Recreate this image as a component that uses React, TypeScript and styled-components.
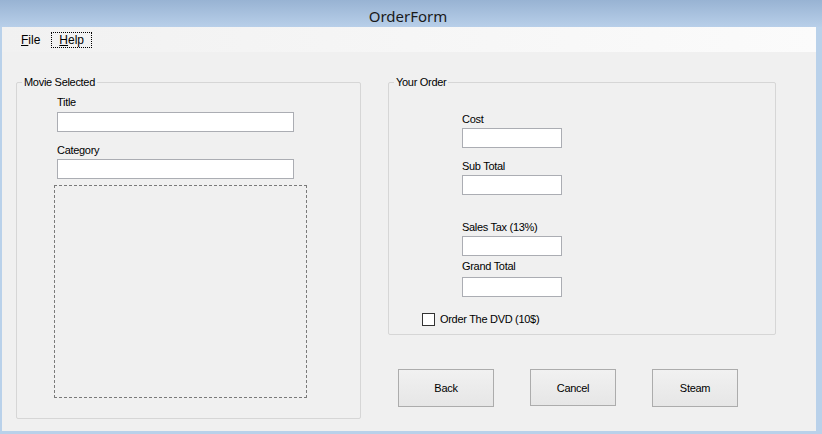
import React from "react";
import styled, { createGlobalStyle } from "styled-components";

const GlobalStyle = createGlobalStyle`
  html, body { margin: 0; padding: 0; }
  body {
    font-family: "Liberation Sans", Arial, sans-serif;
    background: #b9d1ea;
  }
  * { box-sizing: border-box; }
`;

const Window = styled.div`
  width: 822px;
  height: 434px;
  display: flex;
  flex-direction: column;
  background: #b9d1ea;
  overflow: hidden;
`;

const TitleBar = styled.div`
  height: 27px;
  flex: 0 0 27px;
  display: flex;
  align-items: center;
  justify-content: center;
  padding-right: 6px;
  padding-top: 4px;
  background: linear-gradient(#98b3d3, #b8cfe9);
  font-family: "Noto Sans", "Open Sans", sans-serif;
  font-size: 15px;
  color: #1a1a1a;
`;

const Frame = styled.div`
  flex: 1;
  display: flex;
  flex-direction: column;
  padding: 0 6px 3px 2px;
`;

const MenuBar = styled.div`
  height: 25px;
  flex: 0 0 25px;
  display: flex;
  align-items: center;
  gap: 3px;
  padding-left: 11px;
  background: linear-gradient(to right, #f1f1f1, #fbfbfb);
  font-size: 12px;
  color: #000;
`;

const MenuItem = styled.div<{ $focused?: boolean }>`
  height: 16px;
  line-height: 14px;
  padding: 0 7px;
  border: 1px dotted ${(p) => (p.$focused ? "#000" : "transparent")};
`;

const Client = styled.div`
  flex: 1;
  display: flex;
  align-items: flex-start;
  gap: 27px;
  padding: 30px 0 0 14px;
  background: #f0f0f0;
  font-size: 11px;
  letter-spacing: -0.3px;
  color: #000;
`;

const Group = styled.div<{ $w: number; $h: number }>`
  position: relative;
  width: ${(p) => p.$w}px;
  height: ${(p) => p.$h}px;
  border: 1px solid #d6d6d6;
  border-radius: 2px;
  display: flex;
  flex-direction: column;
  align-items: flex-start;
`;

const GroupTitle = styled.span`
  position: absolute;
  top: -7px;
  left: 5px;
  padding: 0 2px;
  line-height: 13px;
  background: #f0f0f0;
`;

const MovieBody = styled.div`
  display: flex;
  flex-direction: column;
  align-items: flex-start;
  padding: 13px 0 0 40px;
`;

const OrderBody = styled.div`
  display: flex;
  flex-direction: column;
  align-items: flex-start;
  padding: 30px 0 0 33px;
`;

const FieldColumn = styled.div`
  display: flex;
  flex-direction: column;
  align-items: flex-start;
  margin-left: 40px;
`;

const Label = styled.span<{ $mt?: number }>`
  display: block;
  line-height: 13px;
  margin-top: ${(p) => p.$mt ?? 0}px;
`;

const TextBox = styled.div<{ $w: number; $mt?: number }>`
  width: ${(p) => p.$w}px;
  height: 20px;
  margin-top: ${(p) => p.$mt ?? 0}px;
  background: #fff;
  border: 1px solid #abadb3;
`;

const PictureBox = styled.div`
  width: 253px;
  height: 213px;
  margin: 6px 0 0 -3px;
  border: 1px dashed #7a7a7a;
`;

const CheckRow = styled.div`
  display: flex;
  align-items: center;
  gap: 5px;
  margin-top: 16px;
`;

const CheckBox = styled.div`
  width: 13px;
  height: 13px;
  background: #fff;
  border: 1px solid #333;
`;

const RightColumn = styled.div`
  display: flex;
  flex-direction: column;
`;

const ButtonRow = styled.div`
  display: flex;
  align-items: flex-start;
  gap: 36px;
  margin: 34px 0 0 10px;
`;

const Button = styled.div<{ $w: number; $h: number }>`
  width: ${(p) => p.$w}px;
  height: ${(p) => p.$h}px;
  display: flex;
  align-items: center;
  justify-content: center;
  background: linear-gradient(#f1f1f1, #e6e6e6);
  border: 1px solid #acacac;
  font-size: 11px;
  color: #000;
`;

export default function App() {
  return (
    <>
      <GlobalStyle />
      <Window>
        <TitleBar>OrderForm</TitleBar>
        <Frame>
          <MenuBar>
            <MenuItem>
              <u>F</u>ile
            </MenuItem>
            <MenuItem $focused>
              <u>H</u>elp
            </MenuItem>
          </MenuBar>
          <Client>
            <Group $w={345} $h={337}>
              <GroupTitle>Movie Selected</GroupTitle>
              <MovieBody>
                <Label>Title</Label>
                <TextBox $w={237} $mt={3} />
                <Label $mt={12}>Category</Label>
                <TextBox $w={237} $mt={2} />
                <PictureBox />
              </MovieBody>
            </Group>
            <RightColumn>
              <Group $w={388} $h={253}>
                <GroupTitle>Your Order</GroupTitle>
                <OrderBody>
                  <FieldColumn>
                    <Label>Cost</Label>
                    <TextBox $w={100} $mt={2} />
                    <Label $mt={12}>Sub Total</Label>
                    <TextBox $w={100} $mt={2} />
                    <Label $mt={26}>Sales Tax (13%)</Label>
                    <TextBox $w={100} $mt={2} />
                    <Label $mt={4}>Grand Total</Label>
                    <TextBox $w={100} $mt={4} />
                  </FieldColumn>
                  <CheckRow>
                    <CheckBox />
                    <Label>Order The DVD (10$)</Label>
                  </CheckRow>
                </OrderBody>
              </Group>
              <ButtonRow>
                <Button $w={96} $h={38}>Back</Button>
                <Button $w={86} $h={37}>Cancel</Button>
                <Button $w={86} $h={38}>Steam</Button>
              </ButtonRow>
            </RightColumn>
          </Client>
        </Frame>
      </Window>
    </>
  );
}
